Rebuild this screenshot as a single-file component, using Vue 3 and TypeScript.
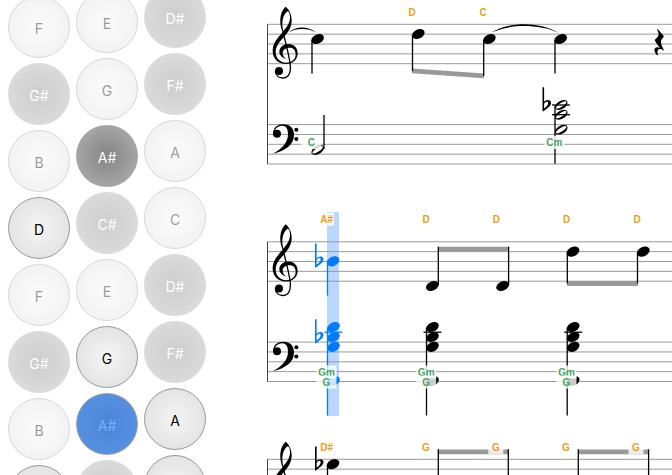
<script setup lang="ts">
type KeyState = 'idle' | 'on' | 'pressed'

interface Key {
  name: string
  state: KeyState
  labelled: boolean
}

interface Head {
  x: number
  y: number
  hollow?: boolean
}

interface Stem {
  x: number
  from: number
  to: number
}

interface Label {
  text: string
  x: number
  y: number
  part: 'melody' | 'chord'
}

interface Voice {
  playing?: boolean
  heads: Head[]
  stems: Stem[]
  flats?: { x: number; y: number }[]
  ledgers?: { x: number; y: number }[]
}

interface System {
  voices: Voice[]
  beams: string[]
  ties: string[]
  rests: { x: number; y: number }[]
  labels: Label[]
}

// The last key of each column only peeks in, so its name stays an accessible label.
const column = (names: string, on: number[], pressed: number[] = []): Key[] =>
  names.split(' ').map((name, i, all) => ({
    name,
    state: pressed.includes(i) ? 'pressed' : on.includes(i) ? 'on' : 'idle',
    labelled: i < all.length - 1,
  }))

const columns: Key[][] = [
  column('F G# B D F G# B D', [3, 7]),
  column('E G A# C# E G A# C#', [2, 5], [6]),
  column('D# F# A C D# F# A C', [6, 7]),
]

const isSharp = (key: Key): boolean => key.name.endsWith('#')

const systemPitch = 217.5
const lineGap = 9.85
const staffTops = [24.3, 124.6]
const staffLines = staffTops.flatMap((top) => [0, 1, 2, 3, 4].map((n) => top + n * lineGap))
const staffBottom = staffTops[1] + 4 * lineGap

const gMinor = (stem: number): Voice => ({
  heads: [109.5, 119.5, 129.3, 163.5].map((y) => ({ x: stem + 6, y })),
  stems: [{ x: stem, from: 110, to: 198 }],
  ledgers: [{ x: stem + 6, y: 114.7 }],
})

const gMinorLabels = (x: number): Label[] => [
  { text: 'Gm', x, y: 158, part: 'chord' },
  { text: 'G', x, y: 168, part: 'chord' },
]

const systems: System[] = [
  {
    voices: [
      {
        heads: [
          { x: 50.6, y: 39 },
          { x: 151.3, y: 34 },
          { x: 222.4, y: 39 },
          { x: 293.7, y: 39 },
          { x: 50.6, y: 150, hollow: true },
          { x: 294.2, y: 105, hollow: true },
          { x: 294.2, y: 114.7, hollow: true },
          { x: 294.2, y: 129.6, hollow: true },
        ],
        stems: [
          { x: 45, from: 40, to: 73.5 },
          { x: 145.5, from: 35, to: 71 },
          { x: 216.7, from: 40, to: 76 },
          { x: 288, from: 40, to: 73.5 },
          { x: 57, from: 115, to: 149 },
          { x: 288, from: 106, to: 163.7 },
        ],
        flats: [{ x: 276.2, y: 105 }],
        ledgers: [
          { x: 294, y: 105 },
          { x: 294, y: 114.7 },
        ],
      },
    ],
    beams: ['M145 68.5L217 73.5V78.3L145 73.3Z'],
    ties: ['M21.5 32.3C29 26 41 26 49 32.3C41 27.8 29 27.8 21.5 32.3Z', 'M224.5 32.6C242 21.5 272 21.5 291.5 32.8C272 23.9 242 23.9 224.5 32.6Z'],
    rests: [{ x: 394.7, y: 42.3 }],
    labels: [
      { text: 'D', x: 145, y: 16, part: 'melody' },
      { text: 'C', x: 216, y: 16, part: 'melody' },
      { text: 'C', x: 44.3, y: 146, part: 'chord' },
      { text: 'Cm', x: 287.3, y: 146, part: 'chord' },
    ],
  },
  {
    voices: [
      {
        playing: true,
        heads: [{ x: 66, y: 43.8 }, ...gMinor(60.5).heads],
        stems: [{ x: 60.5, from: 45, to: 78.2 }, ...gMinor(60.5).stems],
        flats: [
          { x: 48.7, y: 43.8 },
          { x: 48.7, y: 119.5 },
        ],
        ledgers: gMinor(60.5).ledgers,
      },
      gMinor(159.5),
      gMinor(300.2),
      {
        heads: [
          { x: 165.3, y: 68.5 },
          { x: 235.6, y: 68.5 },
          { x: 306, y: 34.1 },
          { x: 376.3, y: 34.1 },
        ],
        stems: [
          { x: 171.3, from: 29.3, to: 68 },
          { x: 241.6, from: 29.3, to: 68 },
          { x: 300.3, from: 35, to: 66 },
          { x: 370.5, from: 35, to: 66 },
        ],
      },
    ],
    beams: ['M171 29.3H242V34.2H171Z', 'M300 63.6H371V68.4H300Z'],
    ties: [],
    rests: [],
    labels: [
      { text: 'A#', x: 59.6, y: 5.3, part: 'melody' },
      { text: 'D', x: 159, y: 5.3, part: 'melody' },
      { text: 'D', x: 229.4, y: 5.3, part: 'melody' },
      { text: 'D', x: 299.6, y: 5.3, part: 'melody' },
      { text: 'D', x: 370, y: 5.3, part: 'melody' },
      ...gMinorLabels(59.5),
      ...gMinorLabels(159.2),
      ...gMinorLabels(299.5),
    ],
  },
  {
    voices: [
      {
        heads: [{ x: 66, y: 29.2 }],
        stems: [
          { x: 60.5, from: 30, to: 64 },
          { x: 171.3, from: 14.3, to: 60 },
          { x: 241.3, from: 14.3, to: 60 },
          { x: 311.3, from: 14.3, to: 60 },
          { x: 381.6, from: 14.3, to: 60 },
        ],
        flats: [{ x: 48.7, y: 29.2 }],
      },
    ],
    beams: ['M171 14.4H242V19.2H171Z', 'M311 14.4H382V19.2H311Z'],
    ties: [],
    rests: [],
    labels: [
      { text: 'D#', x: 59.6, y: 16, part: 'melody' },
      { text: 'G', x: 159, y: 16, part: 'melody' },
      { text: 'G', x: 228.8, y: 16, part: 'melody' },
      { text: 'G', x: 299, y: 16, part: 'melody' },
      { text: 'G', x: 369, y: 16, part: 'melody' },
    ],
  },
]

const labelWidth = (label: Label): number => (label.part === 'chord' ? 20 : 15)
</script>

<template>
  <main class="app">
    <section class="keyboard" aria-label="Button keyboard">
      <div v-for="(keys, c) in columns" :key="c" class="column">
        <button
          v-for="(key, k) in keys"
          :key="k"
          type="button"
          class="key"
          :class="[isSharp(key) ? 'sharp' : 'natural', key.state]"
          :aria-label="key.name"
        >
          <template v-if="key.labelled">{{ key.name }}</template>
        </button>
      </div>
    </section>

    <section class="score" aria-label="Score">
      <svg class="sheet">
        <defs>
          <g id="head"><ellipse rx="6.7" ry="4.6" transform="rotate(-27)" /></g>
          <path
            id="hollow-head"
            fill-rule="evenodd"
            d="M-6.2 2.6C-6.2 -1 -1.5 -4.9 2.7 -4.9C5 -4.9 6.3 -3.8 6.3 -2.2C6.3 1.4 1.6 5 -2.6 5C-5 5 -6.2 4.1 -6.2 2.6ZM-5 3.3C-4.2 4.4 -.5 2.8 2.2 .8C4.6 -1 5.7 -2.6 5 -3.4C4.1 -4.4 .8 -2.9 -2 -.9C-4.5 .9 -5.6 2.5 -5 3.3Z"
          />
          <path
            id="flat"
            fill-rule="evenodd"
            d="M-.7 -17.7H.9V-3C2.6 -5.4 7.8 -6 7.8 -2.1C7.8 1.3 3.6 3.4 .3 6.2H-.7ZM.9 -1.2V3.5C3 1.9 4.9 .2 4.9 -1.8C4.9 -4.2 2.1 -3.6 .9 -1.2Z"
          />
          <path
            id="rest"
            d="M-4 -13.3L1.7 -6.8C2.6 -5.5 1.3 -4.5 .5 -3.6C-2 -.6 -.4 2.2 2.3 7.9L1.7 8.3C-.6 6.5 -2.8 6.4 -3.7 7.6C-4.7 9 -4.3 11 -3.6 12.8L-4.2 13.3C-6.8 10.5 -8.3 7.2 -6.5 5.6C-5.3 4.6 -3.5 4.9 -1.9 5.6L-6.7 -1.4C-7.2 -2.3 -6.6 -2.8 -5.7 -3.6C-2.6 -6.3 -2.3 -8.7 -4.6 -12.6Z"
          />
          <g id="treble" transform="translate(-7 0) scale(.3333)">
            <path
              fill-rule="evenodd"
              d="M77 20C88 28 96 46 95 64C94 84 84 98 70 113C56 128 47 140 47 156C47 174 60 188 78 188C96 188 107 178 107 163C107 151 100 143 89 143C76 143 68 150 68 159C68 167 72 172 78 177C66 173 58 164 58 155C58 142 70 132 86 132C102 132 113 144 113 160C113 180 98 192 78 192C55 192 38 176 38 153C38 130 52 115 68 97C62 82 60 70 61 56C62 40 68 28 77 20ZM83 34C75 38 67 54 67 72C67 80 68 86 70 93C82 80 90 68 90 52C90 44 88 35 83 34Z"
            />
            <path class="clef-stem" d="M69 96C76 125 86 160 91 195C93 222 84 234 68 234C56 234 47 226 46 213" />
            <circle cx="57" cy="213" r="12" />
          </g>
          <g id="bass" transform="translate(-7 0) scale(.3333)">
            <path
              d="M39 461C66 446 84 428 84 402C84 386 78 377 67 377C54 377 44 386 43 397L40 402C38 386 50 373 69 373C90 373 102 385 102 405C102 435 76 452 39 461Z"
            />
            <circle cx="51" cy="401" r="12" />
            <circle cx="109" cy="389" r="6" />
            <circle cx="109" cy="417" r="6" />
          </g>
        </defs>

        <rect class="cursor" x="60" y="212" width="12" height="204" />

        <g v-for="(system, s) in systems" :key="s" :transform="`translate(0 ${s * systemPitch})`">
          <line v-for="y in staffLines" :key="y" class="staff-line" x1="0" x2="100%" :y1="y" :y2="y" />
          <line class="bar-line" x1=".5" x2=".5" :y1="staffTops[0]" :y2="staffBottom" />
          <use href="#treble" />
          <use href="#bass" />

          <path v-for="(d, i) in system.beams" :key="`b${i}`" class="beam" :d="d" />
          <path v-for="(d, i) in system.ties" :key="`t${i}`" class="tie" :d="d" />
          <use v-for="(r, i) in system.rests" :key="`r${i}`" href="#rest" :x="r.x" :y="r.y" />

          <g v-for="(voice, v) in system.voices" :key="`v${v}`" class="voice" :class="{ playing: voice.playing }">
            <line
              v-for="(l, i) in voice.ledgers"
              :key="`l${i}`"
              class="ledger"
              :x1="l.x - 9"
              :x2="l.x + 9"
              :y1="l.y"
              :y2="l.y"
            />
            <line v-for="(m, i) in voice.stems" :key="`s${i}`" class="stem" :x1="m.x" :x2="m.x" :y1="m.from" :y2="m.to" />
            <use
              v-for="(h, i) in voice.heads"
              :key="`h${i}`"
              :href="h.hollow ? '#hollow-head' : '#head'"
              :x="h.x"
              :y="h.y"
            />
            <use v-for="(f, i) in voice.flats" :key="`f${i}`" href="#flat" :x="f.x" :y="f.y" />
          </g>

          <g v-for="(label, i) in system.labels" :key="`n${i}`" class="label" :class="label.part">
            <rect :x="label.x - labelWidth(label) / 2" :y="label.y - 10" :width="labelWidth(label)" height="13" />
            <text :x="label.x" :y="label.y">{{ label.text }}</text>
          </g>
        </g>
      </svg>
    </section>
  </main>
</template>

<style>
body {
  background: #fff;
}
</style>

<style scoped>
.app {
  display: flex;
  height: 100vh;
  overflow: hidden;
  font-family: Inter, "Liberation Sans", sans-serif;
}

.keyboard {
  display: flex;
  flex: none;
  gap: 6px;
  box-sizing: border-box;
  width: 267px;
  padding-left: 8px;
}

.column {
  display: flex;
  flex-direction: column;
  gap: 5px;
  margin-top: -4px;
}

.column:nth-child(2) {
  margin-top: -9px;
}

.column:nth-child(3) {
  margin-top: -14px;
}

.key {
  flex: none;
  box-sizing: border-box;
  width: 62px;
  height: 62px;
  padding: 3px 0 0;
  border: 1px solid transparent;
  border-radius: 50%;
  font: inherit;
  font-size: 14px;
  line-height: 20px;
  cursor: pointer;
}

.natural {
  border-color: #999;
  background: radial-gradient(circle, #f5f5f5, #dcdcdc) border-box;
  color: #000;
}

.sharp {
  background: radial-gradient(circle, #848484, #b4b4b4) border-box;
  color: #fff;
}

.idle {
  opacity: 0.4;
}

.pressed {
  border-color: #a39c94;
  background: radial-gradient(circle, #4a85d8, #5a94e6);
  color: #7cb0f8;
}

.score {
  flex: 1;
  min-width: 0;
}

.sheet {
  display: block;
  width: 100%;
  height: 100%;
}

.staff-line {
  stroke: #999;
  stroke-width: 1;
}

.bar-line {
  stroke: #444;
  stroke-width: 1;
}

.clef-stem {
  fill: none;
  stroke: #000;
  stroke-width: 4;
}

.cursor {
  fill: #bad7ff;
}

.beam {
  fill: #999;
}

.voice {
  fill: #000;
  stroke: none;
}

.stem,
.ledger {
  stroke: #000;
  stroke-width: 1.3;
}

.playing {
  fill: #007bff;
}

.playing .stem,
.playing .ledger {
  stroke: #007bff;
}

.label rect {
  fill: #fff;
  fill-opacity: 0.8;
}

.label text {
  font-family: "Liberation Sans", Arial, sans-serif;
  font-size: 10px;
  font-weight: 700;
  text-anchor: middle;
}

.melody text {
  fill: #eb9f14;
}

.chord text {
  fill: #43a562;
}
</style>
